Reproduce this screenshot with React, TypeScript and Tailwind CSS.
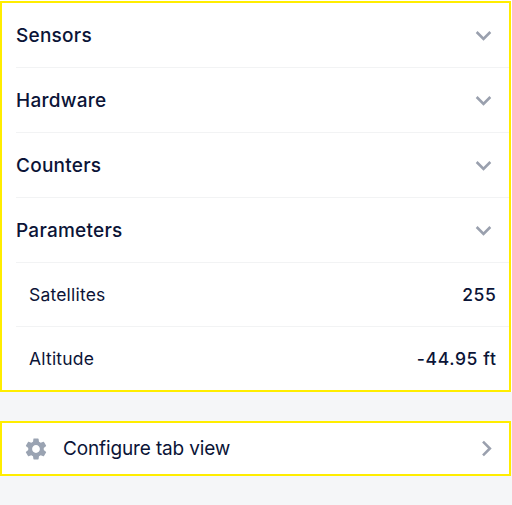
import { MdKeyboardArrowDown, MdKeyboardArrowRight, MdSettings } from "react-icons/md";

const sections = ["Sensors", "Hardware", "Counters", "Parameters"];

const parameters = [
  { label: "Satellites", value: "255" },
  { label: "Altitude", value: "-44.95 ft" },
];

const SectionRow = ({ title }: { title: string }) => (
  <button className="ml-3.5 flex h-[65px] shrink-0 items-center justify-between border-b border-[#f2f3f4] pr-2.5 text-left">
    <span className="pt-0.5 text-[19px] font-medium tracking-[0.25px]">{title}</span>
    <MdKeyboardArrowDown className="size-[31px] text-[#9aa0ae]" />
  </button>
);

const ParameterRow = ({ label, value }: { label: string; value: string }) => (
  <div className="ml-3.5 flex h-16 items-center justify-between border-b border-[#f2f3f4] px-[13px] pt-px last:h-[63px] last:border-b-0">
    <span className="text-[17.5px] tracking-[0.2px]">{label}</span>
    <span className="-mr-[0.5px] text-[17.5px] font-medium tracking-[0.62px]">{value}</span>
  </div>
);

const App = () => {
  return (
    <div className="min-h-screen bg-[#f5f6f8] font-['Inter',sans-serif] text-[#0b1437]">
      {/* Collapsible sections */}
      <div className="bg-white pt-px pr-px">
        <div className="flex h-[391px] flex-col border-2 border-[#ffed00]">
          {sections.map((title) => (
            <SectionRow key={title} title={title} />
          ))}
          {parameters.map((item) => (
            <ParameterRow key={item.label} label={item.label} value={item.value} />
          ))}
        </div>
      </div>

      {/* Configure link */}
      <button className="mt-[29px] flex h-[55px] w-[511px] items-center border-2 border-[#ffed00] bg-white pl-[21px] pr-[7px] text-left">
        <MdSettings className="size-[26px] text-[#9aa3b2]" />
        <span className="ml-3.5 flex-1 pt-0.5 text-[19px] tracking-[-0.14px]">Configure tab view</span>
        <MdKeyboardArrowRight className="size-[31px] text-[#9aa0ae]" />
      </button>
    </div>
  );
};

export default App;
